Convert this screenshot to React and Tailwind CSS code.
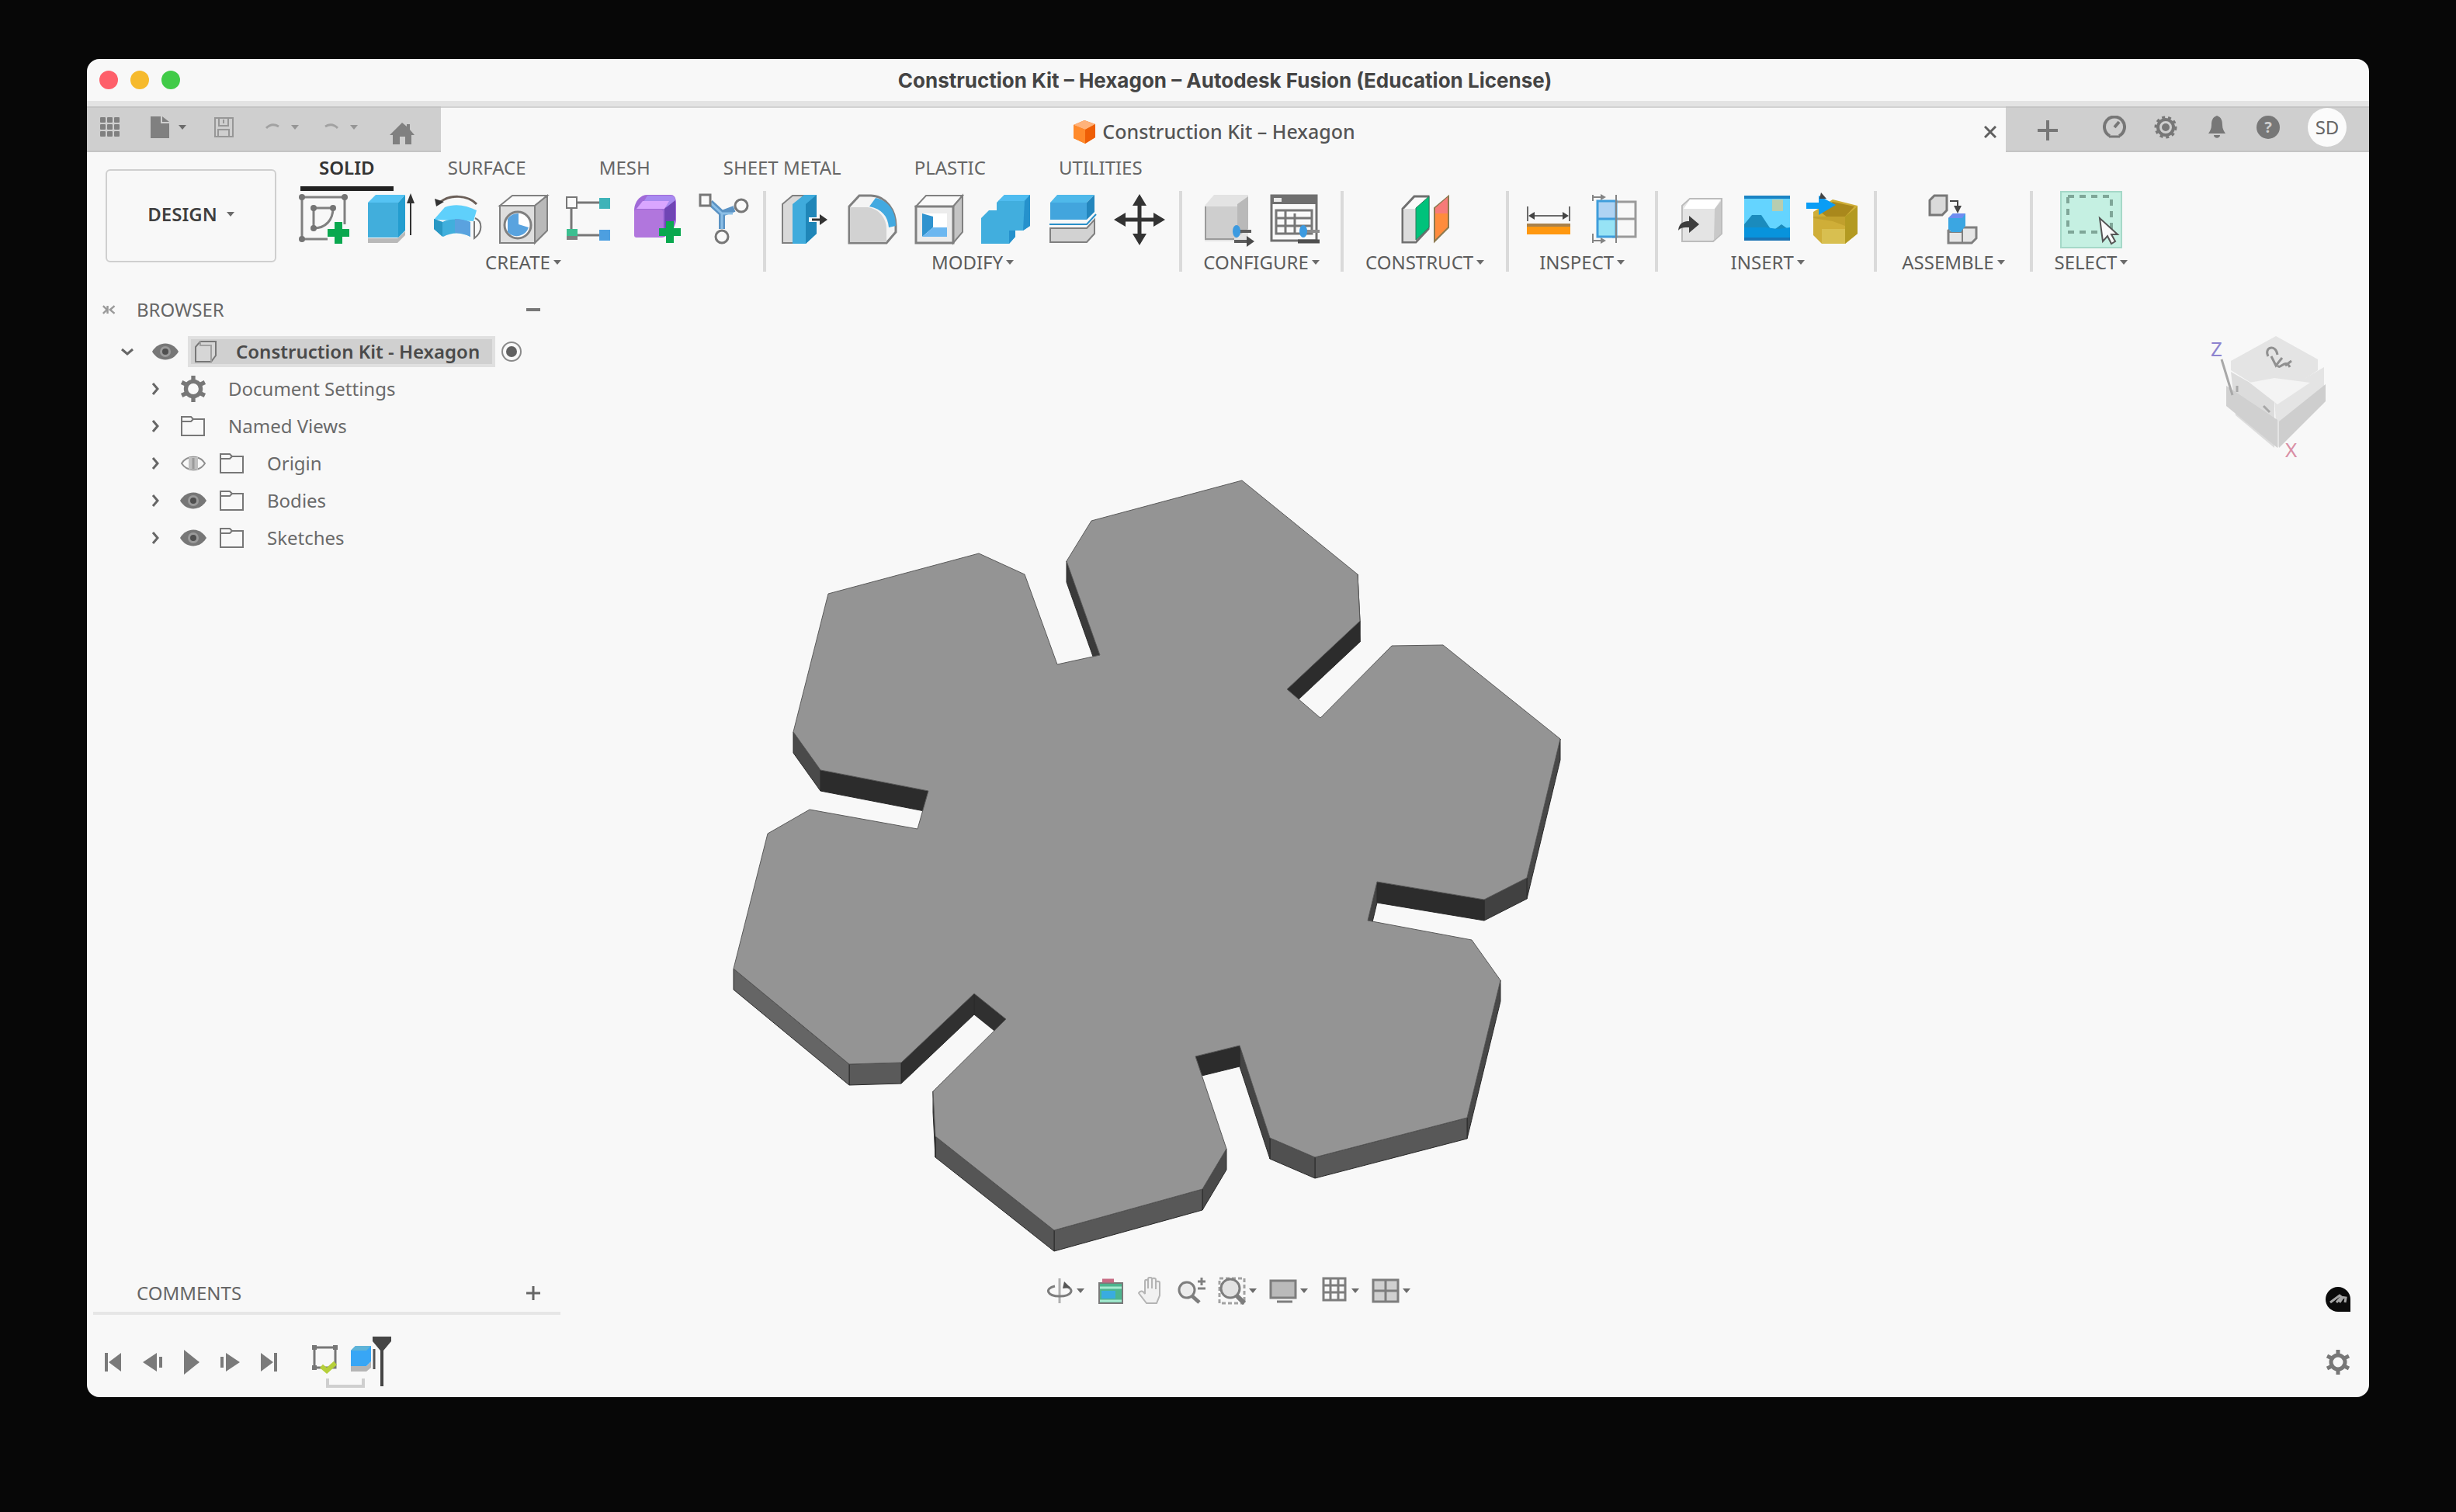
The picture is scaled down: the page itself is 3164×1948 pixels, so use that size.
import { useState } from 'react';
import clsx from 'clsx';

const RIBBON_TABS = ['SOLID', 'SURFACE', 'MESH', 'SHEET METAL', 'PLASTIC', 'UTILITIES'];

/* ---------- small shared pieces ---------- */

const Caret = ({ className = 'text-[#6b6b6b]' }) => (
  <svg viewBox="0 0 10 8" className={clsx('w-[10px] h-2 shrink-0', className)} aria-hidden="true">
    <path d="M0 1h10L5 7z" fill="currentColor" />
  </svg>
);

const Icon = ({ children, className = 'w-16 h-16' }) => (
  <svg viewBox="0 0 64 64" className={clsx('overflow-visible shrink-0', className)} fill="none" aria-hidden="true">
    {children}
  </svg>
);

const Plus = ({ x, y }) => (
  <path
    d={`M${x - 5} ${y - 14}h10v9h9v10h-9v9h-10v-9h-9v-10h9z`}
    fill="#0aa84f"
  />
);

/* ---------- ribbon icons ---------- */

const SketchIcon = () => (
  <Icon>
    <path d="M5 3H60V38M5 3V57H38" stroke="#808080" strokeWidth="3" />
    <path d="M20 17H45C45 32 36 43 20 43Z" stroke="#808080" strokeWidth="3" />
    <g fill="#747474">
      <circle cx="5" cy="3" r="4" />
      <circle cx="60" cy="3" r="4" />
      <circle cx="5" cy="57" r="4" />
      <circle cx="20" cy="17" r="4" />
      <circle cx="45" cy="17" r="4" />
      <circle cx="20" cy="43" r="4" />
    </g>
    <Plus x={52} y={49} />
  </Icon>
);

const ExtrudeIcon = () => (
  <Icon>
    <path d="M4 56H42L52 47V52L42 62H4Z" fill="#b9b9b9" />
    <path d="M4 10L14 0H52L43 10Z" fill="#55c3f3" />
    <path d="M43 10L52 0V46L43 55Z" fill="#239dcf" />
    <path d="M4 10H43V55H4Z" fill="#41aedc" />
    <path d="M59 4V52" stroke="#333" strokeWidth="2" />
    <path d="M59 -2L64 11H54Z" fill="#333" />
  </Icon>
);

const RevolveIcon = () => (
  <Icon>
    <path d="M10 10C24 -1 46 0 58 12" stroke="#6b5f58" strokeWidth="3" />
    <path d="M4 5L16 9L6 15Z" fill="#333" />
    <path d="M3 32L17 16C30 11 44 13 58 20L54 34Z" fill="#5fd0fb" />
    <path d="M3 31L14 35C26 30 38 31 50 35V54C38 48 26 48 15 54L3 44Z" fill="#40afdc" />
    <path d="M30 31C38 31 44 33 50 35V54C44 50 36 49 30 49Z" fill="#5aa2df" />
    <path d="M3 31L14 35V54L3 44Z" fill="#2a98c4" />
    <path d="M56 30C66 34 66 48 55 56V34" stroke="#777" strokeWidth="2" />
  </Icon>
);

const HoleIcon = () => (
  <Icon>
    <path d="M2 14L18 1H63L47 14Z" fill="#fafafa" stroke="#808080" strokeWidth="2" />
    <path d="M47 14L63 1V46L47 62Z" fill="#b9b9b9" stroke="#808080" strokeWidth="2" />
    <path d="M2 14H47V62H2Z" fill="#dedede" stroke="#808080" strokeWidth="2" />
    <circle cx="25" cy="39" r="17" fill="#fff" stroke="#808080" strokeWidth="3" />
    <path d="M12 31A16 16 0 0 1 26 24V38L39 42A16 16 0 0 1 12 48Z" fill="#59a3df" />
  </Icon>
);

const PatternIcon = () => (
  <Icon>
    <path d="M8 18V44M16 10H44M16 52H44" stroke="#777" strokeWidth="3" />
    <rect x="2" y="3" width="13" height="14" fill="#fafafa" stroke="#777" strokeWidth="2" />
    <rect x="44" y="4" width="14" height="14" fill="#3eb3b8" />
    <rect x="2" y="44" width="14" height="14" fill="#3cbf90" />
    <rect x="2" y="53" width="14" height="5" fill="#808080" />
    <rect x="44" y="45" width="14" height="14" fill="#4d9fe0" />
  </Icon>
);

const FormIcon = () => (
  <Icon>
    <path d="M3 20C3 10 10 0 20 0H50C56 0 57 6 57 12V32C57 42 46 55 38 55H8C4 55 3 52 3 48Z" fill="#a06ad8" />
    <path d="M12 14L20 1H50C54 1 56 4 56 8L48 16Z" fill="#a88af0" />
    <path d="M6 18L14 8H48L42 18Z" fill="#d9a6ff" />
    <path d="M42 18L56 7V32L42 46Z" fill="#6f45b4" />
    <rect x="3" y="19" width="37" height="36" rx="3" fill="#b176dd" />
    <Plus x={49} y={48} />
  </Icon>
);

const DeriveIcon = () => (
  <Icon>
    <path d="M15 10L30 24L46 18M30 24V44" stroke="#5b93c4" strokeWidth="8" />
    <path d="M15 10L30 24H44M30 24V44" stroke="#8cbfe6" strokeWidth="3" />
    <rect x="2" y="0" width="13" height="14" fill="#fafafa" stroke="#777" strokeWidth="3" />
    <circle cx="55" cy="14" r="8" fill="#fafafa" stroke="#777" strokeWidth="3" />
    <circle cx="30" cy="54" r="8" fill="#fafafa" stroke="#777" strokeWidth="3" />
  </Icon>
);

const PressPullIcon = () => (
  <Icon>
    <path d="M2 12L15 1H30V62H2Z" fill="#d9d9d9" stroke="#808080" strokeWidth="2" />
    <path d="M15 12L30 0H46V50L32 63H15Z" fill="#3fabdc" />
    <path d="M32 12L46 0V50L32 63Z" fill="#1f86b8" />
    <path d="M36 32H52" stroke="#fff" strokeWidth="6" />
    <path d="M40 32H54" stroke="#333" strokeWidth="3" />
    <path d="M50 25L60 32L50 39Z" fill="#333" />
  </Icon>
);

const FilletIcon = () => (
  <Icon>
    <path d="M2 15L15 1H30C50 2 62 20 62 40V48L50 62H2Z" fill="#f4f4f4" stroke="#808080" strokeWidth="3" />
    <path d="M3 16H26C40 18 50 30 50 44V61H3Z" fill="#d2d2d2" />
    <path d="M36 4C54 8 62 22 62 40L53 42C52 28 44 18 28 15Z" fill="#42a9e0" />
  </Icon>
);

const ShellIcon = () => (
  <Icon>
    <path d="M2 15L15 1H62L50 15Z" fill="#fafafa" stroke="#808080" strokeWidth="2" />
    <path d="M50 15L62 1V48L50 62Z" fill="#c4c4c4" stroke="#808080" strokeWidth="2" />
    <path d="M2 15H50V62H2Z" fill="#ececec" stroke="#808080" strokeWidth="3" />
    <path d="M10 24H42V54H10Z" fill="#fff" />
    <path d="M10 24L24 28V42L10 54Z" fill="#2f93cf" />
    <path d="M24 42H42V54H10Z" fill="#6cb7f0" />
  </Icon>
);

const CombineIcon = () => (
  <Icon>
    <path d="M0 30L10 20H20V10L30 0H63V40L54 46H44V54L36 63H0Z" fill="#41aede" />
    <path d="M20 10L30 0H63L55 8H22Z" fill="#4fbcf0" />
    <path d="M56 8L63 0V40L54 46Z" fill="#2591cc" />
    <path d="M36 46H44V54L36 63Z" fill="#2591cc" />
  </Icon>
);

const SplitIcon = () => (
  <Icon>
    <path d="M3 10L12 0H60L50 10Z" fill="#4fb9ea" />
    <path d="M50 10L60 0V22L50 32Z" fill="#2386bd" />
    <path d="M3 10H50V32H3Z" fill="#42a5dd" />
    <path d="M2 38H50L62 25" stroke="#2a8fc8" strokeWidth="2" />
    <path d="M3 43H50L60 32V50L50 61H3Z" fill="#d2d2d2" stroke="#808080" strokeWidth="2" />
  </Icon>
);

const MoveIcon = () => (
  <Icon>
    <path d="M32 6V58M6 32H58" stroke="#333" strokeWidth="5" />
    <path d="M32 -1L41 14H23ZM32 65L41 50H23ZM-1 32L14 23V41ZM65 32L50 23V41Z" fill="#333" />
  </Icon>
);

const ConfigureIcon = () => (
  <Icon>
    <path d="M2 14L14 0H58V60H2Z" fill="#e3e3e3" />
    <path d="M44 12L58 2V44L44 54Z" fill="#b9b9b9" />
    <path d="M2 15H44V56H2Z" fill="#cecece" />
    <path d="M3 15V57H40" stroke="#9a9a9a" strokeWidth="2" />
    <path d="M40 47H62M40 60H58" stroke="#5d5d5d" strokeWidth="4" />
    <ellipse cx="43" cy="47" rx="5" ry="8" fill="#3c9ae0" />
    <path d="M56 53L66 60L56 67Z" fill="#4a4a4a" />
  </Icon>
);

const TableIcon = () => (
  <Icon>
    <rect x="2" y="1" width="58" height="58" fill="#fafafa" stroke="#6f6f6f" strokeWidth="3" />
    <rect x="1" y="0" width="60" height="12" fill="#6f6f6f" />
    <rect x="5" y="4" width="10" height="5" fill="#e9e9e9" />
    <path d="M8 20H54V50H8ZM8 30H54M8 40H54M20 20V50M32 24V50" stroke="#777" strokeWidth="3" />
    <path d="M42 47H64" stroke="#8c8c8c" strokeWidth="4" />
    <path d="M36 60H64" stroke="#4f4f4f" strokeWidth="5" />
    <ellipse cx="43" cy="47" rx="5" ry="8" fill="#3c9ae0" />
  </Icon>
);

const ConstructIcon = () => (
  <Icon>
    <path d="M3 18L18 2H36V44L20 61H3Z" fill="#fafafa" stroke="#707070" strokeWidth="3" />
    <path d="M4 18H20V60H4Z" fill="#dcdcdc" />
    <path d="M20 17L37 2V42L20 58Z" fill="#00c27b" stroke="#2d7d5c" strokeWidth="1" />
    <path d="M44 17L62 2V42L44 60Z" fill="#ff8c3c" stroke="#8d7a50" strokeWidth="2" />
    <path d="M45 17L61 3V24H45Z" fill="#f77b78" />
  </Icon>
);

const MeasureIcon = () => (
  <Icon>
    <path d="M5 15V34M59 15V34M8 27H56" stroke="#6b6b6b" strokeWidth="2" />
    <path d="M6 27L14 22V32ZM58 27L50 22V32Z" fill="#444" />
    <rect x="4" y="37" width="56" height="14" fill="#ff9810" />
    <rect x="4" y="37" width="56" height="4" fill="#a8814b" />
  </Icon>
);

const SectionIcon = () => (
  <Icon>
    <path d="M28 9H58V54H28M8 31H58" stroke="#9a9a9a" strokeWidth="3" />
    <rect x="9" y="8" width="24" height="24" fill="#afd3f3" />
    <rect x="9" y="32" width="24" height="22" fill="#97e3f5" />
    <path d="M9 8H33V54H9ZM9 31H33" stroke="#3f9ddb" strokeWidth="3" />
    <path d="M33 0V62M3 0V8M3 50V62M3 3H14M3 59H14" stroke="#848484" strokeWidth="2" />
    <path d="M13 -1L20 3L13 7ZM13 55L20 59L13 63Z" fill="#848484" />
  </Icon>
);

const InsertIcon = () => (
  <Icon>
    <path d="M8 14L18 5H59V50L48 60H8Z" fill="#e4e4e4" stroke="#bcbcbc" strokeWidth="2" />
    <path d="M18 6H58L50 18H10Z" fill="#fff" />
    <path d="M50 18L58 8V50L49 58Z" fill="#c9c9c9" />
    <path d="M3 46C4 36 10 34 17 34V27L30 38L17 49V42C10 42 6 42 3 46Z" fill="#3e3e3e" />
  </Icon>
);

const ImageIcon = () => (
  <Icon>
    <rect x="2" y="1" width="59" height="58" fill="#64d4ff" />
    <rect x="2" y="1" width="59" height="4" fill="#1b84c4" />
    <rect x="38" y="6" width="14" height="15" fill="#b7cdb0" />
    <path d="M2 38L12 26H24L36 44H42L50 38L61 46V54H2Z" fill="#1a8bbd" />
    <path d="M2 42H30L46 44L61 42V59H2Z" fill="#0893dc" />
    <rect x="2" y="55" width="59" height="4" fill="#1973b5" />
  </Icon>
);

const PackageIcon = () => (
  <Icon>
    <path d="M5 22L30 6L62 14V50L46 63H16L5 52Z" fill="#cfae38" />
    <path d="M14 22L30 9L58 15L46 28H22Z" fill="#a9881c" />
    <path d="M46 28L62 15V50L46 63Z" fill="#b39a22" />
    <path d="M5 28H46V40L30 34L5 30Z" fill="#c1a02d" />
    <path d="M16 44H46V63H16Z" fill="#d8bf50" />
    <path d="M-4 10H12V1L34 13L12 26V18H-4Z" fill="#0a9df5" />
    <path d="M15 -3L22 5H13Z" fill="#444" />
  </Icon>
);

const AssembleIcon = () => (
  <Icon>
    <path d="M2 7L8 1H24V20L18 26H2Z" fill="#dadada" stroke="#777" strokeWidth="3" />
    <path d="M28 8H38V16" stroke="#444" strokeWidth="2" />
    <path d="M33 14H43L38 24Z" fill="#444" />
    <path d="M26 46L32 42H62V56L56 62H26Z" fill="#e6e6e6" stroke="#808080" strokeWidth="3" />
    <path d="M26 48H44V62M44 62V42" stroke="#808080" strokeWidth="2" />
    <path d="M26 30L32 24H48V40L42 48H30L26 44Z" fill="#3ba6e2" />
    <path d="M26 30L32 24H48L44 30Z" fill="#6f8cf0" />
  </Icon>
);

const SelectIcon = () => (
  <Icon>
    <path d="M2 2H58V48H2Z" stroke="#7fa698" strokeWidth="4" strokeDasharray="8 7" />
    <path d="M43 30L47 60L53 53L58 63L63 60L58 51H66Z" fill="#fafafa" stroke="#555" strokeWidth="2" />
  </Icon>
);

const RIBBON_GROUPS = [
  { name: 'CREATE', pad: 'pr-2', icons: [SketchIcon, ExtrudeIcon, RevolveIcon, HoleIcon, PatternIcon, FormIcon, DeriveIcon] },
  { name: 'MODIFY', pad: 'px-2', icons: [PressPullIcon, FilletIcon, ShellIcon, CombineIcon, SplitIcon, MoveIcon] },
  { name: 'CONFIGURE', pad: 'px-4', icons: [ConfigureIcon, TableIcon] },
  { name: 'CONSTRUCT', pad: 'px-7', icons: [ConstructIcon] },
  { name: 'INSPECT', pad: 'px-2', icons: [MeasureIcon, SectionIcon] },
  { name: 'INSERT', pad: 'pl-3 pr-2', icons: [InsertIcon, ImageIcon, PackageIcon] },
  { name: 'ASSEMBLE', pad: 'px-8', icons: [AssembleIcon] },
  { name: 'SELECT', pad: 'px-7', icons: [SelectIcon], active: true },
];

const RibbonGroup = ({ group }) => (
  <div className={clsx('flex flex-col items-center', group.pad)}>
    <div className="flex h-[74px]">
      {group.icons.map((Glyph, i) => (
        <button
          key={i}
          type="button"
          aria-label={`${group.name} tool ${i + 1}`}
          className={clsx(
            'flex items-center justify-center',
            group.active ? 'w-20 bg-[#c5f0e2] border-2 border-[#a5d8c8]' : 'w-[86px]'
          )}
        >
          <Glyph />
        </button>
      ))}
    </div>
    <button type="button" className="flex items-center gap-1 h-9 text-2xl text-[#5c5c5c]">
      {group.name}
      <Caret />
    </button>
  </div>
);

/* ---------- top bars ---------- */

const TitleBar = () => (
  <header className="flex items-center h-[54px] px-4">
    <div className="flex gap-4">
      <button type="button" aria-label="Close window" className="w-6 h-6 rounded-full bg-[#fe5f6a]" />
      <button type="button" aria-label="Minimize window" className="w-6 h-6 rounded-full bg-[#f6ba2d]" />
      <button type="button" aria-label="Zoom window" className="w-6 h-6 rounded-full bg-[#41cb48]" />
    </div>
    <h1 className="flex-1 pr-28 text-center font-['Inter',sans-serif] font-bold text-[26px] text-[#444]">
      Construction Kit – Hexagon – Autodesk Fusion (Education License)
    </h1>
  </header>
);

const BarButton = ({ label, children, className }) => (
  <button type="button" aria-label={label} className={clsx('flex items-center justify-center gap-3 h-full', className)}>
    {children}
  </button>
);

const TabBar = () => (
  <div className="flex h-[66px] border-t-[7px] border-[#e3e3e3]">
    <div className="flex items-center w-[456px] pl-4 pb-[6px] bg-[#cfcfcf] border-y-2 border-[#c4c4c4] text-[#808080]">
      <BarButton label="Data panel" className="w-7">
        <svg viewBox="0 0 26 26" className="w-[26px] h-[26px]" fill="currentColor">
          {[0, 9, 18].map((y) => [0, 9, 18].map((x) => <rect key={`${x}-${y}`} x={x} y={y} width="7" height="7" rx="1" />))}
        </svg>
      </BarButton>
      <BarButton label="File" className="ml-8 w-[58px]">
        <svg viewBox="0 0 24 28" className="w-6 h-7" fill="currentColor">
          <path d="M0 0H13V9H24V28H0Z" />
          <path d="M15 0L24 7H15Z" />
        </svg>
        <Caret />
      </BarButton>
      <BarButton label="Save" className="ml-7 w-7">
        <svg viewBox="0 0 26 26" className="w-[26px] h-[26px]" fill="none" stroke="#979797" strokeWidth="2">
          <path d="M2 1H25V25H2ZM7 1V11H19V1M6 25V16H20V25M13 3V8" />
        </svg>
      </BarButton>
      <BarButton label="Undo" className="ml-8 w-14">
        <svg viewBox="0 0 24 16" className="w-6 h-4" fill="none" stroke="#a2a2a2" strokeWidth="3">
          <path d="M4 9C9 4 15 4 20 7" />
        </svg>
        <Caret className="text-[#969696]" />
      </BarButton>
      <BarButton label="Redo" className="ml-5 w-14">
        <svg viewBox="0 0 24 16" className="w-6 h-4" fill="none" stroke="#a2a2a2" strokeWidth="3">
          <path d="M4 7C9 4 15 4 20 9" />
        </svg>
        <Caret className="text-[#969696]" />
      </BarButton>
      <BarButton label="Home" className="ml-9 w-8 pt-4">
        <svg viewBox="0 0 32 28" className="w-8 h-7" fill="currentColor">
          <path d="M16 0L22 5V2H26V9L32 16H28V28H20V18H13V28H4V16H0Z" />
        </svg>
      </BarButton>
    </div>

    <div className="flex items-center flex-1 pl-4 pt-1 border-t-2 border-[#d2d2d2]">
      <div className="flex items-center justify-center gap-2 flex-1 text-[#555]">
        <svg viewBox="0 0 30 30" className="w-[30px] h-[30px]">
          <path d="M1 6L15 0L29 5V22L16 30L1 23Z" fill="#f0731a" />
          <path d="M1 6L15 0L29 5L16 12Z" fill="#ffb27a" />
          <path d="M1 6L16 12V30L1 23Z" fill="#ff8a2b" />
          <path d="M16 12L29 5V22L16 30Z" fill="#ee5e06" />
        </svg>
        <span className="font-medium text-[25px]">Construction Kit – Hexagon</span>
      </div>
      <BarButton label="Close tab" className="w-10">
        <svg viewBox="0 0 16 16" className="w-4 h-4" stroke="#606060" strokeWidth="3">
          <path d="M1 1L15 15M15 1L1 15" />
        </svg>
      </BarButton>
    </div>

    <div className="flex items-center w-[468px] pl-10 pb-[6px] bg-[#cfcfcf] border-y-2 border-[#c4c4c4] text-[#777]">
      <BarButton label="New design" className="w-7 pt-2">
        <svg viewBox="0 0 26 26" className="w-[26px] h-[26px]" stroke="currentColor" strokeWidth="4">
          <path d="M13 0V26M0 13H26" />
        </svg>
      </BarButton>
      <div className="flex items-center gap-[34px] h-full ml-14">
        <BarButton label="Extensions" className="w-8">
          <svg viewBox="0 0 30 30" className="w-[30px] h-[30px]" fill="none" stroke="currentColor" strokeWidth="4">
            <path d="M9 26A13 13 0 1 1 21 26M15 15L21 8" />
            <path d="M8 27H22" strokeWidth="3" />
          </svg>
        </BarButton>
        <BarButton label="Job status" className="w-8">
          <svg viewBox="0 0 30 30" className="w-[30px] h-[30px]" fill="none" stroke="currentColor">
            <circle cx="15" cy="15" r="10" strokeWidth="4" />
            <circle cx="15" cy="15" r="13" strokeWidth="3" strokeDasharray="4 4" />
            <circle cx="15" cy="15" r="5" fill="currentColor" stroke="none" />
          </svg>
        </BarButton>
        <BarButton label="Notifications" className="w-8">
          <svg viewBox="0 0 26 30" className="w-[26px] h-[30px]" fill="currentColor">
            <path d="M13 0C19 2 20 7 20 12C20 17 22 20 24 23H2C4 20 6 17 6 12C6 7 7 2 13 0Z" />
            <path d="M9 25H17C17 30 9 30 9 25Z" />
          </svg>
        </BarButton>
        <BarButton label="Help" className="w-8">
          <span className="flex items-center justify-center w-[30px] h-[30px] rounded-full bg-[#777] text-[#cfcfcf] text-xl font-bold">?</span>
        </BarButton>
      </div>
      <BarButton label="Account" className="ml-auto mr-7 w-[52px]">
        <span className="flex items-center justify-center w-[50px] h-[50px] rounded-full bg-[#fbfbfb] text-[#666] text-2xl">SD</span>
      </BarButton>
    </div>
  </div>
);

const Ribbon = () => {
  const [tab, setTab] = useState('SOLID');
  return (
    <section className="flex h-[173px] pl-6">
      <button
        type="button"
        className="flex items-center justify-center gap-3 w-[220px] h-[120px] mt-[22px] mr-[17px] pb-1 rounded-md border-2 border-[#cfcfcf] text-2xl font-semibold text-[#3f3f3f]"
      >
        DESIGN
        <Caret />
      </button>
      <div>
        <nav className="flex gap-[46px] pl-[14px] h-[50px]">
          {RIBBON_TABS.map((name) => (
            <button
              key={name}
              type="button"
              onClick={() => setTab(name)}
              className={clsx(
                'px-6 pb-1 text-2xl border-b-[6px]',
                tab === name ? 'border-[#222] font-semibold text-[#333]' : 'border-transparent text-[#666]'
              )}
            >
              {name}
            </button>
          ))}
        </nav>
        <div className="flex">
          {RIBBON_GROUPS.map((group, i) => (
            <div key={group.name} className="flex">
              {i > 0 && <div className="w-1 h-[104px] bg-[#dadada]" />}
              <RibbonGroup group={group} />
            </div>
          ))}
        </div>
      </div>
    </section>
  );
};

/* ---------- browser panel ---------- */

const EyeIcon = ({ off }) => (
  <svg viewBox="0 0 34 24" className="w-[34px] h-6 shrink-0" fill="none">
    {off ? (
      <>
        <path d="M2 12C9 1 25 1 32 12C25 23 9 23 2 12Z" stroke="#8e8e8e" strokeWidth="2" />
        <path d="M11 4H23V20H11Z" fill="#c0c0c0" />
        <path d="M17 5V19" stroke="#9b9b9b" strokeWidth="3" />
      </>
    ) : (
      <>
        <path d="M0 12C8 -2 26 -2 34 12C26 26 8 26 0 12Z" fill="#777" />
        <circle cx="17" cy="12" r="7" fill="#9a9a9a" />
        <circle cx="17" cy="12" r="4" fill="#4f4f4f" />
      </>
    )}
  </svg>
);

const FolderIcon = () => (
  <svg viewBox="0 0 34 28" className="w-[34px] h-7 shrink-0" fill="none" stroke="#777" strokeWidth="2">
    <path d="M2 2H14L17 5H31V26H2Z" />
    <path d="M2 8H14L17 5" />
  </svg>
);

const GearIcon = ({ className = 'w-8 h-8' }) => (
  <svg viewBox="0 0 32 32" className={clsx('shrink-0', className)} fill="none" stroke="#777">
    <circle cx="16" cy="16" r="9" strokeWidth="5" />
    <path d="M16 0V6M16 26V32M2 8L8 11M24 21L30 24M2 24L8 21M24 11L30 8" strokeWidth="5" />
  </svg>
);

const Chevron = ({ open }) => (
  <svg viewBox="0 0 16 16" className="w-4 h-4 shrink-0" fill="none" stroke="#666" strokeWidth="3">
    <path d={open ? 'M1 5L8 11L15 5' : 'M5 1L11 8L5 15'} />
  </svg>
);

const TREE = [
  { name: 'Document Settings', kind: 'gear' },
  { name: 'Named Views', kind: 'folder' },
  { name: 'Origin', kind: 'folder', eye: 'off' },
  { name: 'Bodies', kind: 'folder', eye: 'on' },
  { name: 'Sketches', kind: 'folder', eye: 'on' },
];

const BrowserPanel = () => (
  <aside className="flex flex-col w-[610px] shrink-0">
    <div className="flex items-center h-[60px] pl-5 pr-[26px] text-2xl text-[#666]">
      <button type="button" aria-label="Collapse browser" className="w-11">
        <svg viewBox="0 0 22 14" className="w-[18px] h-3" fill="none" stroke="#9a9a9a" strokeWidth="3">
          <path d="M1 1L7 7L1 13M8 1V13M19 1L12 7L19 13" />
        </svg>
      </button>
      <h2 className="flex-1">BROWSER</h2>
      <button type="button" aria-label="Minimize browser" className="w-[18px] h-1 bg-[#777]" />
    </div>

    <ul className="text-2xl text-[#6a6a6a]">
      <li className="flex items-center h-12 pl-11">
        <Chevron open />
        <button type="button" aria-label="Toggle visibility" className="ml-6">
          <EyeIcon />
        </button>
        <button
          type="button"
          className="flex items-center gap-6 h-10 ml-3 pl-1 pr-4 bg-[#d0d0d0] border-4 border-[#e0e0e0] font-semibold text-[#4a4a4a]"
        >
          <svg viewBox="0 0 30 30" className="w-[30px] h-[30px]" fill="#d6d6d6" stroke="#777" strokeWidth="2">
            <path d="M2 9L8 2H28V20L22 28H2Z" />
            <path d="M8 2V7H22V28" fill="none" stroke="#a0a0a0" />
          </svg>
          Construction Kit - Hexagon
        </button>
        <label className="flex items-center justify-center w-[26px] h-[26px] ml-2 rounded-full border-2 border-[#8a8a8a]">
          <input type="radio" name="active-component" defaultChecked aria-label="Activate component" className="appearance-none w-[14px] h-[14px] rounded-full bg-[#606060]" />
        </label>
      </li>
      {TREE.map((node) => (
        <li key={node.name} className="flex items-center h-12 pl-20">
          <button type="button" aria-label={`Expand ${node.name}`}>
            <Chevron />
          </button>
          <span className="flex items-center gap-4 ml-6">
            {node.eye && <EyeIcon off={node.eye === 'off'} />}
            {node.kind === 'gear' ? <GearIcon className="w-[34px] h-[34px]" /> : <FolderIcon />}
          </span>
          <span className="ml-7">{node.name}</span>
        </li>
      ))}
    </ul>

    <div className="flex items-center justify-between h-[54px] mt-auto ml-2 pl-14 pr-[26px] pt-[2px] border-b-4 border-[#e6e6e6] text-2xl text-[#666]">
      <h2>COMMENTS</h2>
      <button type="button" aria-label="Add comment">
        <svg viewBox="0 0 18 18" className="w-[18px] h-[18px]" stroke="#666" strokeWidth="3">
          <path d="M9 0V18M0 9H18" />
        </svg>
      </button>
    </div>
  </aside>
);

/* ---------- canvas ---------- */

// Each vertex carries the shade of the side wall that starts at it.
const OUTLINE = [
  [506, 91], [700, 39], [849, 160, '#3a3a3a'], [852, 220, '#2c2c2c'], [758, 308], [801, 345],
  [893, 252], [959, 251], [1110, 372, '#484848'], [1067, 551, '#414141'], [1012, 579, '#2c2c2c'],
  [874, 556, '#414141'], [862, 606], [996, 631], [1033, 683, '#484848'], [990, 860, '#585858'],
  [794, 911, '#505050'], [736, 886, '#444444'], [697, 767, '#2c2c2c'], [640, 781], [680, 900, '#4a4a4a'],
  [649, 952, '#585858'], [458, 1005, '#555555'], [305, 884], [302, 826], [396, 733, '#303030'],
  [355, 700, '#303030'], [261, 789, '#5a5a5a'], [194, 791, '#656565'], [45, 668], [89, 494],
  [143, 463], [282, 488], [296, 439, '#2c2c2c'], [157, 412, '#4a4a4a'], [122, 363], [167, 185],
  [361, 133], [420, 160], [462, 276], [517, 264, '#3a3a3a'], [474, 143],
];
const THICKNESS = 27;

const HexagonModel = () => (
  <svg viewBox="0 0 1364 1060" className="w-[1364px] h-[1060px]" role="img" aria-label="Hexagon body">
    {OUTLINE.map(([x, y, shade], i) => {
      const [nx, ny] = OUTLINE[(i + 1) % OUTLINE.length];
      // walls facing away from the camera are hidden by the top face
      if (nx > x && !shade) return null;
      return (
        <path
          key={i}
          d={`M${x} ${y}L${nx} ${ny}V${ny + THICKNESS}L${x} ${y + THICKNESS}Z`}
          fill={shade || '#3a3a3a'}
          stroke="#2a2a2a"
          strokeWidth="1"
        />
      );
    })}
    <path
      d={`M${OUTLINE.map(([x, y]) => `${x} ${y}`).join('L')}Z`}
      fill="#949494"
      stroke="#5a5a5a"
      strokeWidth="1"
    />
  </svg>
);

const NavButton = ({ label, caret, children }) => (
  <button type="button" aria-label={label} className="flex items-center gap-1">
    <svg viewBox="0 0 36 36" className="w-9 h-9" fill="none" stroke="#7d7d7d" strokeWidth="3">
      {children}
    </svg>
    {caret && <Caret />}
  </button>
);

const NavToolbar = () => (
  <div className="flex items-center gap-4 h-[46px] mb-2">
    <NavButton label="Orbit" caret>
      <path d="M18 2V34" stroke="#b0b0b0" />
      <path d="M26 12C38 16 34 25 18 25C2 25 -2 15 12 12" />
      <path d="M24 6L32 14L22 15Z" fill="#555" stroke="none" />
    </NavButton>
    <NavButton label="Look at">
      <path d="M3 8H33V34H3Z" fill="#4cb58e" stroke="#7a7a7a" strokeWidth="2" />
      <path d="M6 18H24V28H6Z" fill="#39ace0" stroke="none" />
      <path d="M4 14H32M4 31H32" stroke="#a5ead0" strokeWidth="3" />
      <path d="M7 5H22" stroke="#c76b84" strokeWidth="5" />
    </NavButton>
    <NavButton label="Pan">
      <path d="M12 34L2 21C4 17 8 18 10 22V6C10 3 14 3 14 6V15V3C14 0 19 0 19 3V15V4C19 1 24 1 24 4V16V8C24 5 29 5 29 8V24L25 34Z" fill="#f1f1f1" stroke="#b4b4b4" strokeWidth="2" />
    </NavButton>
    <NavButton label="Zoom">
      <circle cx="12" cy="17" r="10" fill="#ececec" />
      <path d="M19 25L28 33" strokeWidth="5" />
      <path d="M31 1V11M26 6H36M26 15H36" stroke="#808080" />
    </NavButton>
    <NavButton label="Fit" caret>
      <path d="M2 2H34V34H2Z" stroke="#a2a2a2" strokeDasharray="5 3" />
      <circle cx="16" cy="15" r="12" fill="#e2e2e2" />
      <path d="M24 24L34 34" strokeWidth="6" />
    </NavButton>
    <NavButton label="Display settings" caret>
      <path d="M2 5H34V27H2Z" fill="#bababa" />
      <path d="M10 32H30" />
    </NavButton>
    <NavButton label="Grid and snaps" caret>
      <path d="M4 2H32V30H4ZM4 11H32M4 20H32M13 2V30M23 2V30" />
    </NavButton>
    <NavButton label="Viewports" caret>
      <path d="M2 4H34V32H2Z" fill="#d0d0d0" />
      <path d="M2 18H34M18 4V32" />
    </NavButton>
  </div>
);

const ViewCube = () => (
  <svg viewBox="0 0 170 170" className="w-[170px] h-[170px]" role="img" aria-label="View cube">
    <path d="M86 2L140 32V46L86 82L28 46V34Z" fill="#e4e4e4" />
    <path d="M28 48L84 80V146L34 104Z" fill="#dcdcdc" />
    <path d="M84 80L148 42V88L88 146Z" fill="#e4e4e4" />
    <path d="M22 66L88 110V146L22 92Z" fill="#d0d0d0" />
    <path d="M90 112L150 64V86L90 146Z" fill="#cecece" />
    <path d="M84 56L130 62L88 90L52 62Z" fill="#f4f4f4" />
    <path d="M76 28C70 16 86 12 88 26M80 28L86 40L94 30M88 40C92 46 98 30 104 42M98 40L106 34" fill="none" stroke="#909090" strokeWidth="3" />
    <path d="M16 32L30 78M36 66V74M70 92L78 100" fill="none" stroke="#a8a8a8" strokeWidth="3" />
    <text x="2" y="28" fontSize="26" fill="#8d83cf">Z</text>
    <text x="98" y="158" fontSize="26" fill="#d98fa5">X</text>
  </svg>
);

const Workspace = () => (
  <div className="flex flex-1">
    <BrowserPanel />
    <main className="flex flex-col items-center justify-end flex-1">
      <HexagonModel />
      <NavToolbar />
    </main>
    <aside className="flex flex-col items-end justify-between w-[610px] shrink-0 pt-[62px] pb-1 pr-6">
      <div className="pr-3">
        <ViewCube />
      </div>
      <button type="button" aria-label="Assistant">
        <svg viewBox="0 0 32 32" className="w-8 h-8">
          <path d="M16 0A16 16 0 0 1 32 16V32H16A16 16 0 0 1 16 0Z" fill="#0b0b0b" />
          <path d="M6 20L18 11L22 14L18 20M14 20L20 13L26 14L25 20" fill="none" stroke="#a5a5a5" strokeWidth="3" />
        </svg>
      </button>
    </aside>
  </div>
);

/* ---------- timeline ---------- */

const PLAYBACK = [
  { label: 'Go to start', d: 'M1 0H5V24H1ZM22 0V24L6 12Z' },
  { label: 'Step back', d: 'M18 0V24L0 12ZM21 5H25V19H21Z' },
  { label: 'Play', d: 'M3 -4L23 12L3 28Z' },
  { label: 'Step forward', d: 'M7 0V24L25 12ZM0 5H4V19H0Z' },
  { label: 'Go to end', d: 'M2 0V24L18 12ZM19 0H23V24H19Z' },
];

const Timeline = () => (
  <footer className="flex items-center h-[106px] pl-[22px] pr-6 pt-4">
    <div className="flex gap-6">
      {PLAYBACK.map((b) => (
        <button key={b.label} type="button" aria-label={b.label}>
          <svg viewBox="0 0 26 24" className="w-[26px] h-6 overflow-visible" fill="#7a7a7a">
            <path d={b.d} />
          </svg>
        </button>
      ))}
    </div>
    <svg viewBox="0 0 110 70" className="w-[110px] h-[70px] ml-10 flex-none" fill="none" role="img" aria-label="Timeline features">
      <path d="M5 16H32V42H5Z" stroke="#777" strokeWidth="3" />
      <path d="M2 13H8V19H2ZM29 13H35V19H29ZM2 39H8V45H2Z" fill="#777" />
      <path d="M14 40L21 46L32 36" stroke="#b6cf3a" strokeWidth="6" />
      <path d="M52 40H72L78 34V42L72 47H52Z" fill="#b5b5b5" />
      <path d="M52 20L58 14H78V34L72 40H52Z" fill="#38a6f5" />
      <path d="M52 20L58 14H78L72 20Z" fill="#5fb4d8" />
      <path d="M82 18V44" stroke="#555" strokeWidth="3" />
      <path d="M22 56V66H68V56" stroke="#cfcfcf" strokeWidth="4" />
      <path d="M80 2H104V8L94 20V66H90V20L80 8Z" fill="#454545" />
    </svg>
    <button type="button" aria-label="Timeline settings" className="ml-auto">
      <GearIcon />
    </button>
  </footer>
);

const App = () => (
  <div className="flex min-h-screen px-28 pt-[76px] pb-[148px] bg-[#070707] font-['Noto_Sans',sans-serif]">
    <div className="flex flex-col flex-1 rounded-2xl overflow-hidden bg-[#f8f8f8]">
      <TitleBar />
      <TabBar />
      <Ribbon />
      <Workspace />
      <Timeline />
    </div>
  </div>
);

export default App;
